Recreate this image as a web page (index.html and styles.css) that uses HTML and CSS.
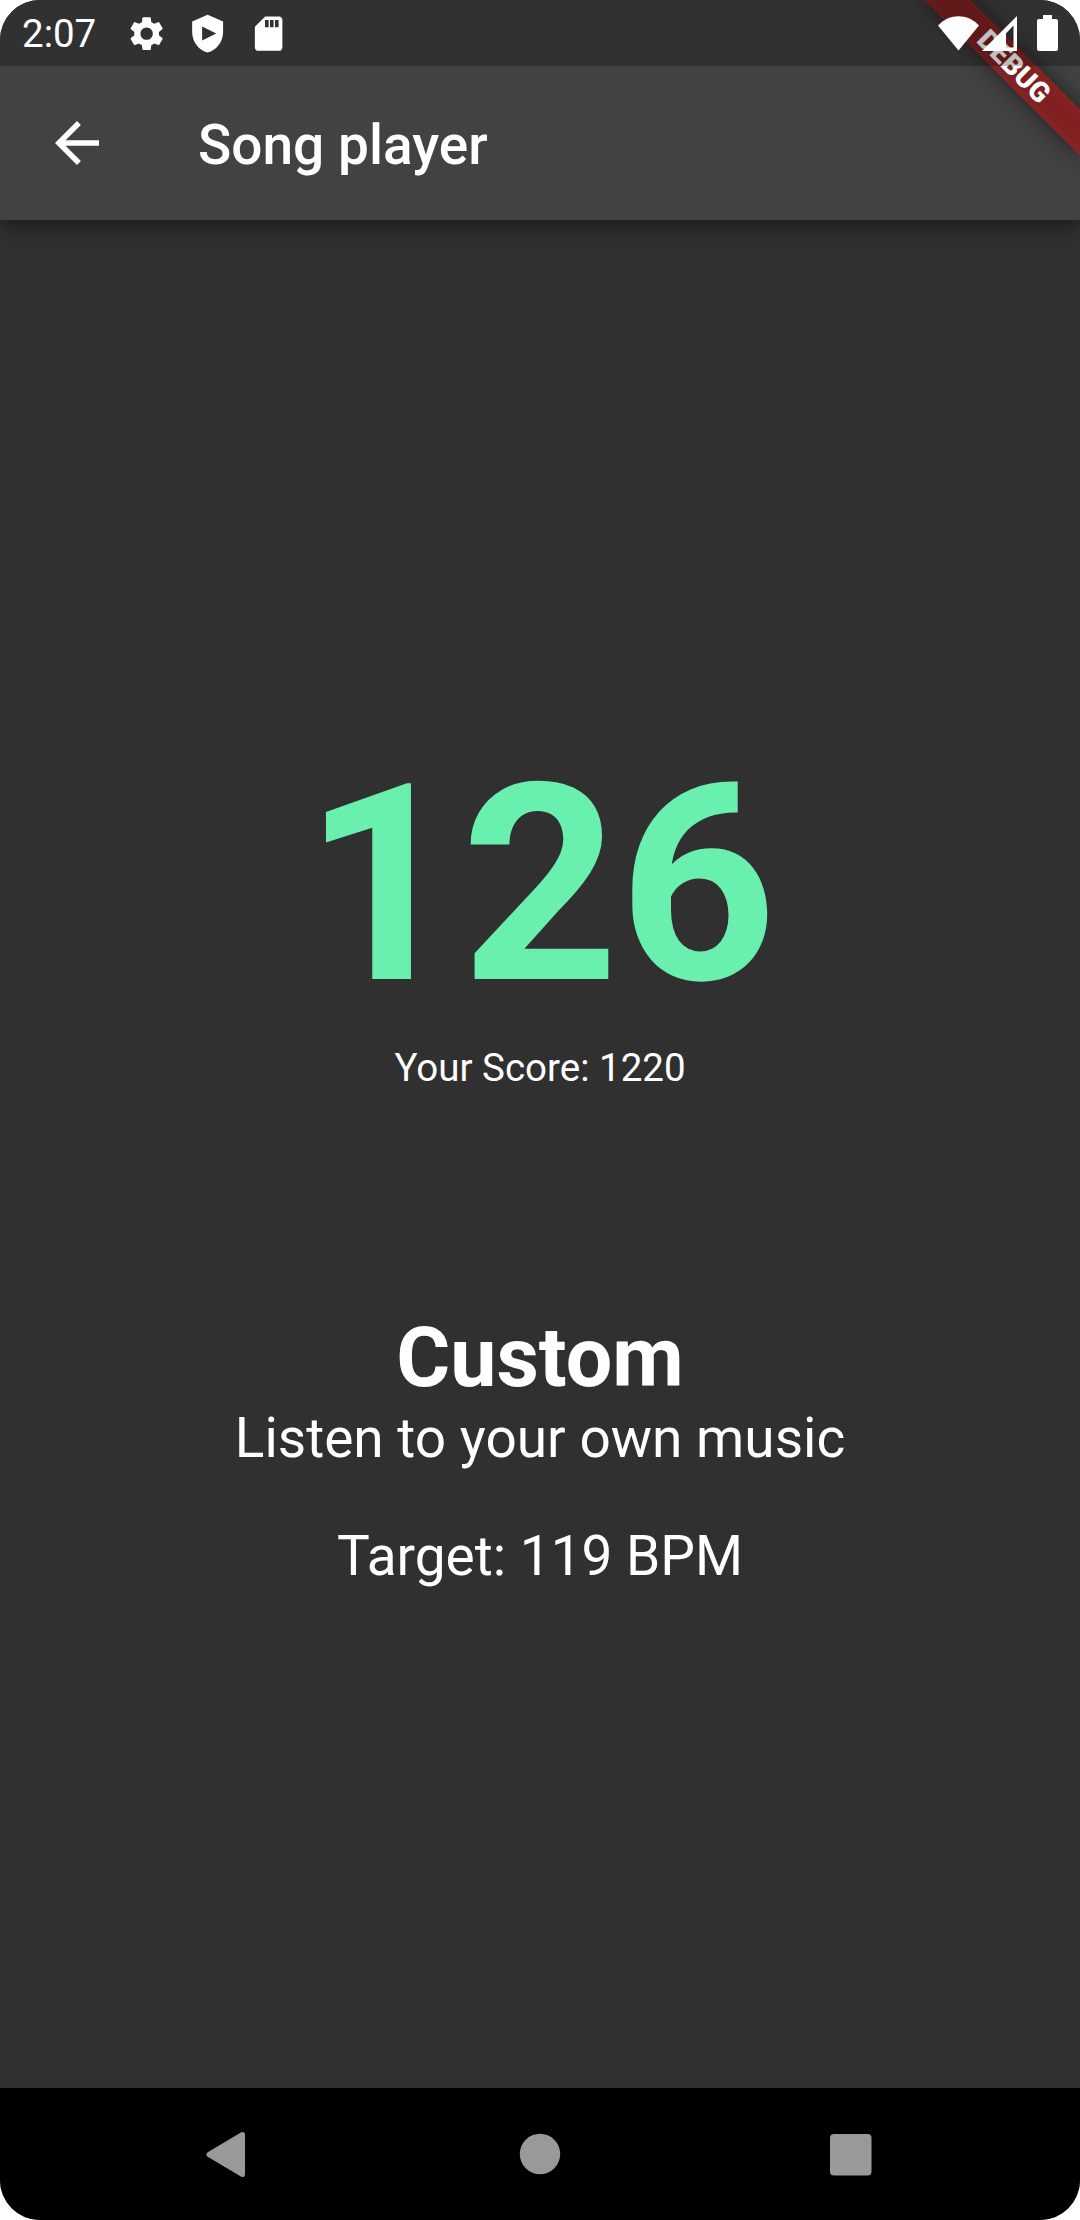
FILE: index.html
```html
<!DOCTYPE html>
<html lang="en">
<head>
<meta charset="utf-8">
<title>Song player</title>
<link rel="stylesheet" href="styles.css">
</head>
<body>
<div class="screen">
  <div class="status-scrim"></div>
  <div class="debug-banner"><span class="debug-label">DEBUG</span></div>
  <div class="status-bar">
    <span class="clock">2:07</span>
    <div class="notifications">
      <svg viewBox="0 0 24 24"><path d="M19.14 12.94c.04-.3.06-.61.06-.94 0-.32-.02-.64-.07-.94l2.03-1.58c.18-.14.23-.41.12-.61l-1.92-3.32c-.12-.22-.37-.29-.59-.22l-2.39.96c-.5-.38-1.03-.7-1.62-.94l-.36-2.54c-.04-.24-.24-.41-.48-.41h-3.84c-.24 0-.43.17-.47.41l-.36 2.54c-.59.24-1.13.57-1.62.94l-2.39-.96c-.22-.08-.47 0-.59.22L2.74 8.87c-.12.21-.08.47.12.61l2.03 1.58c-.05.3-.09.63-.09.94s.02.64.07.94l-2.03 1.58c-.18.14-.23.41-.12.61l1.92 3.32c.12.22.37.29.59.22l2.39-.96c.5.38 1.03.7 1.62.94l.36 2.54c.05.24.24.41.48.41h3.84c.24 0 .44-.17.47-.41l.36-2.54c.59-.24 1.13-.56 1.62-.94l2.39.96c.22.08.47 0 .59-.22l1.92-3.32c.12-.22.07-.47-.12-.61l-2.01-1.58zM12 15.6c-1.98 0-3.6-1.62-3.6-3.6s1.62-3.6 3.6-3.6 3.6 1.62 3.6 3.6-1.62 3.6-3.6 3.6z"/></svg>
      <svg viewBox="0 0 24 24"><path fill-rule="evenodd" d="M12 1 3 5v6c0 5.55 3.84 10.74 9 12 5.16-1.26 9-6.45 9-12V5zM8.800 7.800v8.200l8.200-4.100z"/></svg>
      <svg viewBox="0 0 24 24"><path fill-rule="evenodd" d="M18 2h-8L4 8v12c0 1.1.9 2 2 2h12c1.100 0 2-.9 2-2V4c0-1.100-.9-2-2-2zM9.900 4v4.300h2.100V4zm2.900 0v4.300h2.100V4zm2.900 0v4.300h2.100V4z"/></svg>
    </div>
    <div class="system-icons">
      <svg class="wifi" viewBox="0 0 41 35"><path d="M0 9.500C11-3 30-3 41 9.500L20.500 34.500z"/></svg>
      <svg class="signal" viewBox="0 0 35 35"><path fill-rule="evenodd" d="M35 0v35H0zM24 17.500v14h7.500V9.500z"/></svg>
      <svg class="battery" viewBox="0 0 21 36"><path d="M6 0h9v4h4a2 2 0 0 1 2 2v28a2 2 0 0 1-2 2H2a2 2 0 0 1-2-2V6a2 2 0 0 1 2-2h4z"/></svg>
    </div>
  </div>
  <header class="app-bar">
    <svg class="back" viewBox="0 0 24 24"><path d="M20 11H7.830l5.590-5.590L12 4l-8 8 8 8 1.410-1.410L7.830 13H20z"/></svg>
    <h1 class="title">Song player</h1>
  </header>
  <main class="content">
    <div class="bpm">126</div>
    <div class="score">Your Score: 1220</div>
    <h2 class="song">Custom</h2>
    <div class="line">Listen to your own music</div>
    <div class="line target">Target: 119 BPM</div>
  </main>
  <nav class="nav-bar">
    <svg viewBox="0 0 66 66"><path d="M10.700 31.200 44.300 11.200q3.700-1.200 3.700 2.300v40q0 3.500-3.700 2.300L10.700 35.800q-2.800-2.300 0-4.600z"/></svg>
    <svg viewBox="0 0 66 66"><circle cx="33" cy="33" r="20.200"/></svg>
    <svg viewBox="0 0 66 66"><rect x="13" y="13" width="41.500" height="41.500" rx="4"/></svg>
  </nav>
</div>
</body>
</html>
```
FILE: styles.css
```css
body {
  margin: 0;
  background: #fff;
  font-family: Roboto, "Liberation Sans", sans-serif;
  color: #fff;
}

svg {
  display: block;
  fill: #fff;
}

.screen {
  position: relative;
  display: flex;
  flex-direction: column;
  width: 1080px;
  height: 2220px;
  border-radius: 40px;
  overflow: hidden;
  background: #303030;
}

.status-bar {
  position: relative;
  z-index: 4;
  display: flex;
  align-items: center;
  flex: none;
  height: 66px;
  box-sizing: border-box;
  padding: 0 22px;
}

.status-scrim {
  position: absolute;
  z-index: 3;
  inset: 0 0 auto;
  height: 66px;
  background: rgba(0, 0, 0, 0.25);
}

.clock {
  width: 103.5px;
  padding-top: 2px;
  font-size: 38.5px;
  line-height: 66px;
}

.notifications {
  display: flex;
  gap: 20px;
  padding-top: 1px;
}

.notifications svg {
  width: 41.25px;
  height: 41.25px;
}

.system-icons {
  display: flex;
  align-items: center;
  margin-left: auto;
}

.wifi {
  width: 41px;
  height: 35px;
  margin-right: 3px;
}

.signal {
  width: 35px;
  height: 35px;
  margin-right: 20px;
}

.battery {
  width: 21px;
  height: 36px;
}

.app-bar {
  position: relative;
  z-index: 1;
  display: flex;
  align-items: center;
  gap: 88px;
  flex: none;
  box-sizing: border-box;
  height: 220px;
  margin-top: -66px;
  padding: 66px 44px 0;
  background: #424242;
  box-shadow: 0 5.5px 11px -2.75px rgba(0, 0, 0, 0.2), 0 11px 13.75px rgba(0, 0, 0, 0.14), 0 2.75px 27.5px rgba(0, 0, 0, 0.12);
}

.back {
  width: 66px;
  height: 66px;
}

.title {
  margin: 0;
  padding-top: 3px;
  font-size: 55px;
  font-weight: 500;
}

.debug-banner {
  position: absolute;
  z-index: 2;
  top: 49.6px;
  right: -43.9px;
  width: 220px;
  height: 33px;
  transform: rotate(45deg);
  text-align: center;
}

.debug-banner::before,
.debug-banner::after {
  content: "";
  position: absolute;
  inset: 0;
}

.debug-banner::before {
  background: rgba(0, 0, 0, 0.5);
  filter: blur(11px);
}

.debug-banner::after {
  background: rgba(183, 28, 28, 0.627);
}

.debug-label {
  position: relative;
  z-index: 1;
  display: block;
  font-size: 28px;
  font-weight: 900;
  line-height: 33px;
}

.content {
  flex: 1;
  display: flex;
  flex-direction: column;
  align-items: center;
  justify-content: center;
  padding-top: 3px;
}

.bpm {
  margin-bottom: -2px;
  font-size: 275px;
  font-weight: 700;
  line-height: 324px;
  color: #69f0ae;
}

.score {
  font-size: 38.5px;
  line-height: 45px;
}

.song {
  margin: 219px 0 0;
  font-size: 82.5px;
  font-weight: 700;
  line-height: 97px;
}

.line {
  font-size: 55px;
  line-height: 65px;
}

.target {
  margin-top: 53px;
}

.nav-bar {
  display: flex;
  align-items: center;
  justify-content: center;
  gap: 244px;
  flex: none;
  height: 132px;
  background: #000;
}

.nav-bar svg {
  width: 66px;
  height: 66px;
  fill: #999;
}
```
